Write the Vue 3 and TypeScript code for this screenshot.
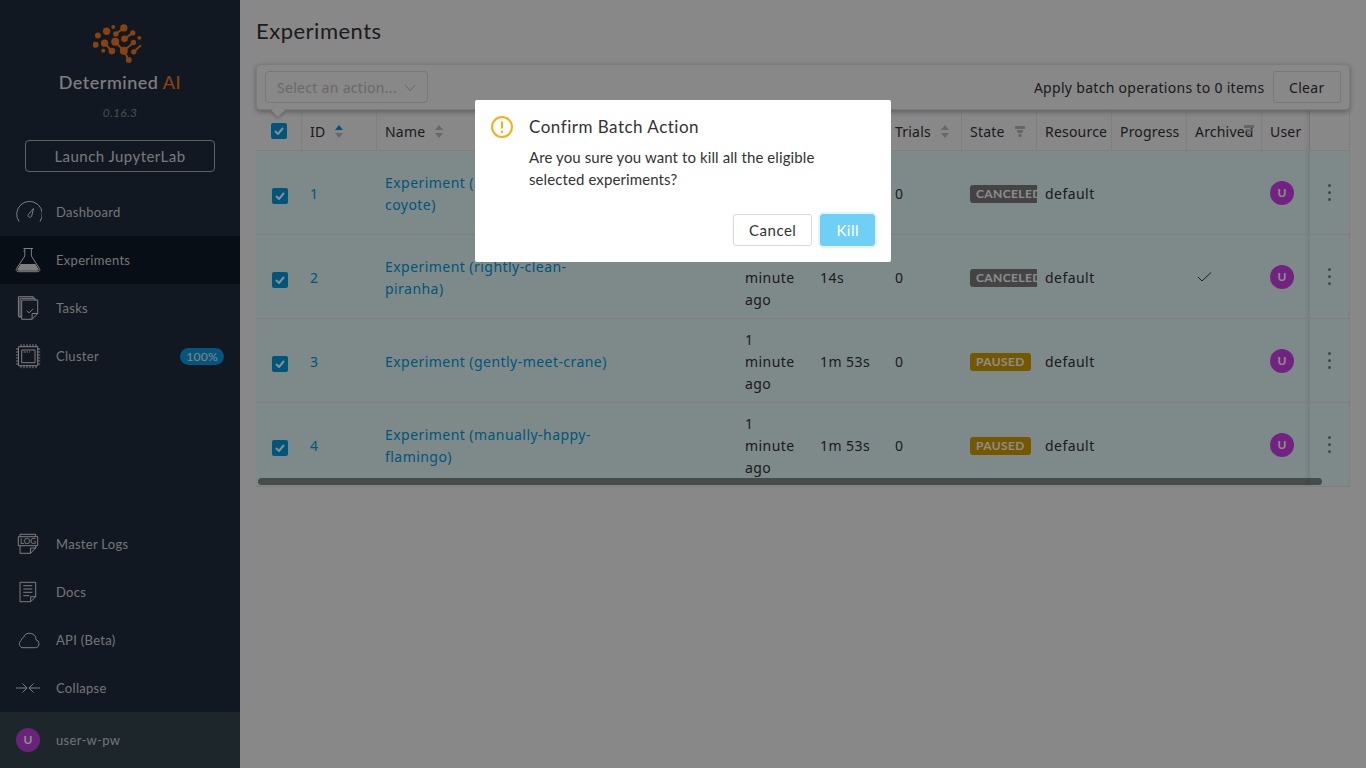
<script setup lang="ts">
interface Experiment {
  id: number
  name: string
  state: 'CANCELED' | 'PAUSED'
  duration: string
  archived: boolean
}

interface Column {
  label: string
  sort?: 'asc' | 'none'
  filter?: boolean
  filterOver?: boolean
}

const columns: Column[] = [
  { label: 'ID', sort: 'asc' },
  { label: 'Name', sort: 'none' },
  { label: 'Labels' },
  { label: 'Start Time', sort: 'none' },
  { label: 'Duration', sort: 'none' },
  { label: 'Trials', sort: 'none' },
  { label: 'State', filter: true },
  { label: 'Resource' },
  { label: 'Progress' },
  { label: 'Archived', filterOver: true },
  { label: 'User' },
]

const experiments: Experiment[] = [
  { id: 1, name: 'Experiment (amazingly-quiet-coyote)', state: 'CANCELED', duration: '14s', archived: false },
  { id: 2, name: 'Experiment (rightly-clean-piranha)', state: 'CANCELED', duration: '14s', archived: true },
  { id: 3, name: 'Experiment (gently-meet-crane)', state: 'PAUSED', duration: '1m 53s', archived: false },
  { id: 4, name: 'Experiment (manually-happy-flamingo)', state: 'PAUSED', duration: '1m 53s', archived: false },
]

// logo nodes, traced from the brand mark
const logoDots: number[][] = [
  [292, 105, 9], [318, 92, 11], [338, 79, 6], [370, 82, 11], [346, 100, 8], [397, 97, 8],
  [417, 112, 6], [372, 115, 10], [285, 133, 9], [312, 128, 11], [344, 124, 12], [399, 126, 8],
  [308, 151, 6], [334, 152, 10], [370, 151, 12], [400, 154, 8], [385, 179, 9],
]
const logoLinks: number[][] = [
  [346, 100, 370, 82], [372, 115, 397, 97], [312, 128, 334, 152], [344, 124, 370, 151],
  [370, 151, 385, 179], [370, 151, 399, 126], [400, 154, 422, 134],
]
</script>

<template>
  <div class="page">
    <aside class="sidebar">
      <div class="brand">
        <svg class="logo" viewBox="277 65 166 125" width="55" height="42">
          <line
            v-for="(l, i) in logoLinks"
            :key="'l' + i"
            :x1="l[0]" :y1="l[1]" :x2="l[2]" :y2="l[3]"
            stroke="#f47b20" stroke-width="6"
          />
          <circle v-for="(d, i) in logoDots" :key="'d' + i" :cx="d[0]" :cy="d[1]" :r="d[2]" fill="#f47b20" />
        </svg>
        <div class="wordmark">Determined <span class="wordmark-ai">AI</span></div>
        <div class="version">0.16.3</div>
        <button class="launch">Launch JupyterLab</button>
      </div>

      <nav class="nav">
        <a class="nav-item">
          <svg class="nav-icon" viewBox="0 0 28 28">
            <path d="M5 23.5A12.8 12.8 0 1 1 26 23.5" />
            <path d="M19.5 10.5L17.6 18.4a2 2 0 0 1-3.6-.6 2 2 0 0 1 .6-1.6z" />
          </svg>
          <span>Dashboard</span>
        </a>
        <a class="nav-item active">
          <svg class="nav-icon" viewBox="0 0 28 28">
            <path d="M9.5 2.5h9.5M10.8 2.5v2.5h-1.3M10.8 5v5L2.6 22.5a2 2 0 0 0 1.7 3.2h19.4a2 2 0 0 0 1.7-3.2L17.4 10V2.5" />
            <path class="fill" d="M6.6 18h14.8l3.2 5a1.2 1.2 0 0 1-1 1.7H4.4a1.2 1.2 0 0 1-1-1.7z" />
          </svg>
          <span>Experiments</span>
        </a>
        <a class="nav-item">
          <svg class="nav-icon" viewBox="0 0 28 28">
            <path d="M7.7 22.6H4.4V2.7h14.8v1.6M6 4.3V24M6 4.3h15v2" />
            <path d="M7.7 6h16v13.5l-5.6 5.8H7.7zM23.7 19.5h-5.6v5.8" />
            <path d="M12.7 16.6l2.3 2.2 4.2-4" />
          </svg>
          <span>Tasks</span>
        </a>
        <a class="nav-item">
          <svg class="nav-icon" viewBox="0 0 28 28">
            <path d="M4.5 4.7h19.2v19H4.5zM7.7 8h13.3v12.7H7.7z" />
            <path d="M9.500 10h2M12.500 10h1.500M15 10h1" />
            <path d="M7 2.200v2.500M10 2.200v2.500M13 2.200v2.500M16 2.200v2.500M19 2.200v2.500M22 2.200v2.500M7 23.700v2.500M10 23.700v2.500M13 23.700v2.500M16 23.700v2.500M19 23.700v2.500M22 23.700v2.500M2 7h2.500M2 10h2.500M2 13h2.500M2 16h2.500M2 19h2.500M2 22h2.500M23.700 7h2.500M23.700 10h2.500M23.700 13h2.500M23.700 16h2.500M23.700 19h2.500M23.700 22h2.500" />
          </svg>
          <span>Cluster</span>
          <span class="nav-badge">100%</span>
        </a>
      </nav>

      <nav class="nav nav-bottom">
        <a class="nav-item">
          <svg class="nav-icon" viewBox="0 0 28 28">
            <path d="M6 6.700V4.300h15.700v2.400M4.300 6.700h19.400v9H4.300zM6 15.700v7.600h10.500l5.200-5.200v-2.400M21.700 18.100h-5.200v5.200" />
            <text class="icon-text" x="14" y="14">LOG</text>
          </svg>
          <span>Master Logs</span>
        </a>
        <a class="nav-item">
          <svg class="nav-icon" viewBox="0 0 28 28">
            <path d="M6 4.300h15.700v14.400l-5 5H6zM21.700 18.700h-5v5" />
            <path d="M9.300 7.700h9M9.300 11h9M9.300 14.300h9M9.300 17.700h6" />
          </svg>
          <span>Docs</span>
        </a>
        <a class="nav-item">
          <svg class="nav-icon" viewBox="0 0 28 28">
            <path d="M8 21.700h13.500a3.800 3.800 0 0 0 3.500-4.200 4 4 0 0 0-3-3.700 6.500 6.500 0 0 0-12.500-2.500 4.500 4.500 0 0 0-2.500 3.200 4.200 4.200 0 0 0 1 7.200z" />
          </svg>
          <span>API (Beta)</span>
        </a>
        <a class="nav-item">
          <svg class="nav-icon" viewBox="0 0 28 28">
            <path d="M2 14h10.500M8.500 9.500l4.500 4.500-4.500 4.500M26 14H15.500M19.500 9.500L15 14l4.500 4.500" />
          </svg>
          <span>Collapse</span>
        </a>
      </nav>

      <div class="account">
        <span class="avatar">U</span>
        <span>user-w-pw</span>
      </div>
    </aside>

    <main class="main">
      <h1 class="title">Experiments</h1>

      <div class="toolbar">
        <div class="select">
          <span>Select an action...</span>
          <svg width="12" height="8" viewBox="0 0 12 8"><path d="M1 1l5 5.500L11 1" fill="none" stroke="#bbb" /></svg>
        </div>
        <div class="toolbar-right">
          <span class="batch-note">Apply batch operations to 0 items</span>
          <button class="btn">Clear</button>
        </div>
      </div>

      <div class="table-wrap">
        <table class="table">
          <colgroup>
            <col style="width: 46px" />
            <col style="width: 75px" />
            <col style="width: 260px" />
            <col style="width: 100px" />
            <col v-for="n in 7" :key="n" style="width: 75px" />
            <col style="width: 48px" />
            <col style="width: 40px" />
          </colgroup>
          <thead>
            <tr>
              <th class="check-cell"><span class="check"><svg width="10" height="8" viewBox="0 0 10 8"><path d="M1 4l3 3 5-6" fill="none" stroke="#fff" stroke-width="2" /></svg></span></th>
              <th v-for="col in columns" :key="col.label">
                <div class="th-inner">
                  <span class="th-label">{{ col.label }}</span>
                  <span v-if="col.sort" class="sorter">
                    <i class="tri-up" :class="{ on: col.sort === 'asc' }"></i>
                    <i class="tri-down"></i>
                  </span>
                  <svg v-if="col.filter" class="funnel" width="10" height="11" viewBox="0 0 10 11"><path d="M0 0h10v3H0zM1.500 4h7L7 7H3zM3.500 8h3v3h-3z" fill="#b8b8b8" /></svg>
                  <svg v-if="col.filterOver" class="funnel funnel-over" width="10" height="11" viewBox="0 0 10 11"><path d="M0 0h10v3H0zM1.500 4h7L7 7H3zM3.500 8h3v3h-3z" fill="#b8b8b8" /></svg>
                </div>
              </th>
              <th class="action-cell"></th>
            </tr>
          </thead>
          <tbody>
            <tr v-for="exp in experiments" :key="exp.id">
              <td class="check-cell"><span class="check check-row"><svg width="10" height="8" viewBox="0 0 10 8"><path d="M1 4l3 3 5-6" fill="none" stroke="#fff" stroke-width="2" /></svg></span></td>
              <td><a class="link">{{ exp.id }}</a></td>
              <td class="name-cell"><a class="link">{{ exp.name }}</a></td>
              <td></td>
              <td class="time-cell">1 minute ago</td>
              <td>{{ exp.duration }}</td>
              <td>0</td>
              <td class="state-cell"><span class="badge" :class="exp.state.toLowerCase()">{{ exp.state }}</span></td>
              <td>default</td>
              <td></td>
              <td class="archived-cell">
                <svg v-if="exp.archived" class="tick" width="16" height="10" viewBox="0 0 16 10"><path d="M1 5l4 4 9-8.500" fill="none" stroke="#333" /></svg>
              </td>
              <td><span class="avatar">U</span></td>
              <td class="action-cell"><span class="dots"><i></i><i></i><i></i></span></td>
            </tr>
          </tbody>
        </table>
        <div class="scrollbar"></div>
      </div>
    </main>

    <div class="overlay">
      <div class="modal">
        <div class="modal-head">
          <svg width="22" height="22" viewBox="0 0 22 22">
            <circle cx="11" cy="11" r="10" fill="none" stroke="#faad14" stroke-width="2" />
            <path d="M11 5.500v7" stroke="#faad14" stroke-width="2" />
            <circle cx="11" cy="15.800" r="1.200" fill="#faad14" />
          </svg>
          <div class="modal-title">Confirm Batch Action</div>
        </div>
        <div class="modal-body">Are you sure you want to kill all the eligible selected experiments?</div>
        <div class="modal-foot">
          <button class="btn btn-modal">Cancel</button>
          <button class="btn btn-primary">Kill</button>
        </div>
      </div>
    </div>
  </div>
</template>

<style>
html,
body {
  margin: 0;
  background: #f7f7f7;
}
</style>

<style scoped>
.page {
  display: flex;
  height: 100vh;
  overflow: hidden;
  font-family: Lato, "Liberation Sans", sans-serif;
  font-size: 14px;
  line-height: 22px;
  color: #333;
}

/* sidebar */
.sidebar {
  display: flex;
  flex-direction: column;
  flex: none;
  width: 240px;
  background: #1f2c3e;
  color: #d9d9d9;
  letter-spacing: 0.3px;
}

.brand {
  display: flex;
  flex-direction: column;
  align-items: center;
  padding: 22px 25px 16px;
}

.logo {
  display: block;
}

.wordmark {
  margin-top: 6px;
  font-size: 18px;
  font-weight: 500;
  line-height: 24px;
  letter-spacing: 0.5px;
  color: #e6e6e6;
}

.wordmark-ai {
  color: #f47b20;
}

.version {
  margin-top: 10px;
  font-size: 12px;
  line-height: 18px;
  font-style: italic;
  color: #8c8c8c;
}

.launch {
  width: 190px;
  height: 32px;
  margin-top: 18px;
  border: 1px solid #b5b5b5;
  border-radius: 4px;
  background: transparent;
  color: #dcdcdc;
  font: inherit;
  font-size: 15px;
  letter-spacing: 0.45px;
}

.nav-bottom {
  margin-top: auto;
}

.nav-item {
  display: flex;
  align-items: center;
  gap: 14px;
  height: 48px;
  padding: 0 16px 0 14px;
  font-size: 13px;
  letter-spacing: 0.3px;
  color: #d4d4d4;
}

.nav-item.active {
  background: #101b28;
}

.nav-icon {
  flex: none;
  width: 28px;
  height: 28px;
  fill: none;
  stroke: #e6e6e6;
  stroke-width: 1;
}

.nav-icon .fill {
  fill: #e6e6e6;
  stroke: none;
}

.icon-text {
  fill: #e6e6e6;
  stroke: none;
  font-size: 8px;
  letter-spacing: 0;
  text-anchor: middle;
}

.nav-badge {
  margin-left: auto;
  padding: 0 6px;
  border-radius: 9px;
  background: #0a9be3;
  font-size: 12px;
  line-height: 17px;
  color: #f0f0f0;
}

.account {
  display: flex;
  align-items: center;
  gap: 16px;
  flex: none;
  height: 56px;
  padding: 0 16px;
  background: #36454f;
  font-size: 13px;
  color: #d4d4d4;
}

.avatar {
  display: inline-flex;
  align-items: center;
  justify-content: center;
  width: 24px;
  height: 24px;
  border-radius: 50%;
  background: #d040ec;
  color: #fff;
  font-family: Lato, sans-serif;
  font-size: 12px;
  font-weight: 700;
  letter-spacing: 0;
  vertical-align: middle;
}

.account .avatar {
  background: #c040e0;
}

/* main */
.main {
  flex: 1;
  min-width: 0;
  padding: 16px 16px 0;
  font-family: "Noto Sans", Lato, sans-serif;
}

.title {
  margin: 0 0 16px;
  padding-bottom: 2px;
  font-family: Lato, sans-serif;
  font-size: 22px;
  font-weight: 400;
  line-height: 30px;
  letter-spacing: 0.5px;
}

.toolbar {
  position: relative;
  z-index: 2;
  display: flex;
  align-items: center;
  justify-content: space-between;
  height: 46px;
  padding: 0 8px;
  box-sizing: border-box;
  border: 1px solid #e2e2e2;
  border-radius: 4px;
  background: #f7f7f7;
  box-shadow: 0 2px 5px rgba(0, 0, 0, 0.3);
  letter-spacing: 0.3px;
}

.toolbar::after {
  content: '';
  position: absolute;
  left: 16px;
  bottom: -6px;
  width: 10px;
  height: 10px;
  background: #f7f7f7;
  transform: rotate(45deg);
  box-shadow: 2px 2px 3px rgba(0, 0, 0, 0.15);
}

.select {
  display: flex;
  align-items: center;
  justify-content: space-between;
  width: 163px;
  height: 32px;
  padding: 2px 11px 0;
  box-sizing: border-box;
  border: 1px solid #d9d9d9;
  border-radius: 4px;
  color: #bfbfbf;
}

.toolbar-right {
  display: flex;
  align-items: center;
  gap: 8px;
}

.batch-note {
  padding-top: 2px;
}

.btn {
  height: 32px;
  padding: 0 15px;
  border: 1px solid #d9d9d9;
  border-radius: 3px;
  background: transparent;
  color: #333;
  font: inherit;
  letter-spacing: inherit;
}

.toolbar .btn {
  padding: 2px 15.5px 0;
}

/* table */
.table-wrap {
  position: relative;
  margin-top: 1px;
}

.table {
  width: 1094px;
  border-collapse: separate;
  border-spacing: 0;
  table-layout: fixed;
}

th {
  height: 40px;
  padding: 2px 8px 0;
  box-sizing: border-box;
  overflow: hidden;
  border-right: 1px solid #e8e8e8;
  border-bottom: 1px solid #e8e8e8;
  font-weight: 400;
  text-align: left;
  letter-spacing: 0.2px;
  white-space: nowrap;
}

.th-inner {
  position: relative;
  display: flex;
  align-items: center;
  gap: 10px;
}

.sorter {
  display: flex;
  flex-direction: column;
  gap: 3px;
}

.tri-up,
.tri-down {
  display: block;
  width: 0;
  height: 0;
  border-left: 4px solid transparent;
  border-right: 4px solid transparent;
}

.tri-up {
  border-bottom: 5px solid #bfbfbf;
}

.tri-up.on {
  border-bottom-color: #009bde;
}

.tri-down {
  border-top: 5px solid #bfbfbf;
}

.funnel-over {
  position: absolute;
  right: -1px;
  top: 4px;
}

td {
  height: 84px;
  padding: 9px 8px 7px;
  box-sizing: border-box;
  border-bottom: 1px solid #ebe4e4;
  background: #e6fbfb;
  letter-spacing: 0.45px;
  vertical-align: middle;
}

th.check-cell {
  padding: 0 0 0 15px;
}

td.check-cell {
  padding: 0 0 0 16px;
}

.check {
  display: flex;
  align-items: center;
  justify-content: center;
  width: 16px;
  height: 16px;
  border-radius: 2px;
  background: #009bde;
}

.check-row {
  margin-top: 6px;
}

.link {
  color: #009bde;
}

.name-cell {
  padding-right: 24px;
}

.time-cell {
  padding-right: 12px;
}

.state-cell {
  overflow: hidden;
  padding-right: 0;
}

.badge {
  display: inline-block;
  height: 18px;
  margin-top: -2px;
  padding: 0 6px;
  border-radius: 3px;
  color: #fff;
  font-family: Lato, sans-serif;
  font-size: 12px;
  font-weight: 700;
  line-height: 18px;
  letter-spacing: 0.4px;
  white-space: nowrap;
  vertical-align: 1px;
}

.badge.canceled {
  background: #7c7c7c;
}

.badge.paused {
  background: #d59f00;
}

.archived-cell {
  padding-left: 10px;
}

.tick {
  display: block;
  margin-top: -2px;
}

td .avatar {
  margin-top: -2px;
}

.action-cell {
  position: relative;
  padding: 0;
  overflow: visible;
}

.action-cell::before {
  content: '';
  position: absolute;
  top: 0;
  bottom: 0;
  left: -6px;
  width: 6px;
  background: linear-gradient(to right, rgba(0, 0, 0, 0), rgba(0, 0, 0, 0.08));
}

td.action-cell {
  padding: 0;
  border-right: 1px solid #e8e8e8;
}

.dots {
  display: flex;
  flex-direction: column;
  align-items: center;
  gap: 3.7px;
}

.dots i {
  width: 3px;
  height: 3px;
  border-radius: 50%;
  background: #7c8080;
}

.scrollbar {
  position: absolute;
  left: 2px;
  bottom: 2px;
  width: 1064px;
  height: 7px;
  border-radius: 4px;
  background: rgba(0, 0, 0, 0.45);
}

/* confirm modal */
.overlay {
  position: fixed;
  inset: 0;
  z-index: 10;
  display: flex;
  justify-content: center;
  align-items: flex-start;
  padding-top: 100px;
  box-sizing: border-box;
  background: rgba(0, 0, 0, 0.45);
}

.modal {
  width: 416px;
  padding: 16px;
  box-sizing: border-box;
  border-radius: 2px;
  background: #fff;
  font-size: 15px;
  letter-spacing: 0.1px;
}

.modal-head {
  display: flex;
  align-items: center;
  gap: 16px;
}

.modal-title {
  font-size: 17px;
  letter-spacing: 0.5px;
}

.modal-body {
  margin: 8px 50px 0 38px;
}

.modal-foot {
  display: flex;
  justify-content: flex-end;
  gap: 8px;
  margin-top: 24px;
}

.modal-foot .btn {
  letter-spacing: 0.5px;
}

.btn-primary {
  border-color: #6fcff5;
  background: #6fcff5;
  color: #fff;
  box-shadow: 0 0 0 2px #e2f6fd;
}
</style>
